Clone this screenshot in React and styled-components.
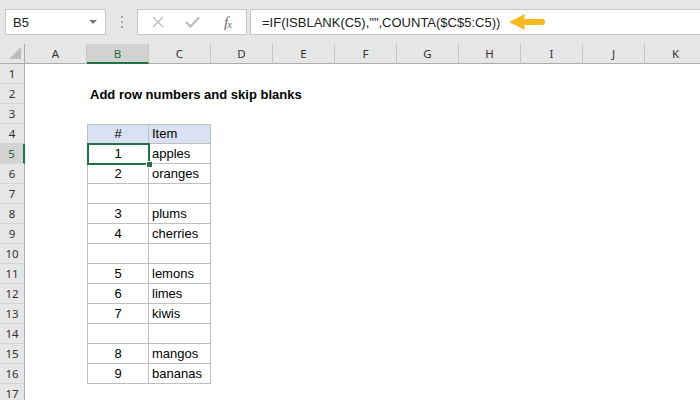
import React from "react";
import styled, { createGlobalStyle } from "styled-components";

const GlobalStyle = createGlobalStyle`
  html, body {
    margin: 0;
    padding: 0;
    background: #ffffff;
  }
  body {
    width: 700px;
    height: 400px;
    overflow: hidden;
    font-family: "Liberation Sans", Arial, sans-serif;
  }
`;

const COLS = ["A", "B", "C", "D", "E", "F", "G", "H", "I", "J", "K"];

// rows 5..16, null = blank row
const ITEMS = [
  [1, "apples"],
  [2, "oranges"],
  null,
  [3, "plums"],
  [4, "cherries"],
  null,
  [5, "lemons"],
  [6, "limes"],
  [7, "kiwis"],
  null,
  [8, "mangos"],
  [9, "bananas"],
];

const Sheet = styled.div`
  width: 700px;
  height: 400px;
  overflow: hidden;
  display: flex;
  flex-direction: column;
  background: #ffffff;
`;

const FormulaBar = styled.div`
  flex: none;
  height: 44px;
  box-sizing: border-box;
  padding: 9px 0 0 5px;
  background: #e6e6e6;
  display: flex;
  align-items: flex-start;
`;

const NameBox = styled.div`
  width: 101px;
  height: 26px;
  box-sizing: border-box;
  background: #ffffff;
  border: 1px solid #c6c6c6;
  display: flex;
  align-items: center;
  justify-content: space-between;
  padding: 0 8px 0 7px;
  font-size: 13px;
  color: #222;
`;

const Caret = styled.span`
  width: 0;
  height: 0;
  border-left: 4px solid transparent;
  border-right: 4px solid transparent;
  border-top: 4px solid #7a7a7a;
`;

const Grip = styled.div`
  width: 31px;
  height: 26px;
  display: flex;
  flex-direction: column;
  align-items: center;
  justify-content: center;
  gap: 3px;

  span {
    width: 2px;
    height: 2px;
    background: #a8a8a8;
  }
`;

const ButtonBox = styled.div`
  width: 110px;
  height: 26px;
  box-sizing: border-box;
  background: #ffffff;
  border: 1px solid #c6c6c6;
  display: flex;
  align-items: center;
  padding-left: 2px;
`;

const BarButton = styled.div`
  width: 35px;
  height: 24px;
  display: flex;
  align-items: center;
  justify-content: center;
  color: ${(p) => (p.$active ? "#666666" : "#bdbdbd")};
`;

const Fx = styled.span`
  font-family: "Liberation Serif", "Times New Roman", serif;
  font-style: italic;
  font-size: 15px;
  color: #6a6a6a;
  letter-spacing: -1px;

  sub {
    font-size: 11px;
    vertical-align: -1px;
  }
`;

const FormulaInput = styled.div`
  flex: 1;
  margin-left: 3px;
  margin-right: -2px;
  height: 26px;
  box-sizing: border-box;
  background: #ffffff;
  border: 1px solid #c6c6c6;
  display: flex;
  align-items: center;
  padding-left: 11px;
  gap: 9px;
  font-size: 13px;
  color: #222;
  white-space: nowrap;
`;

const Grid = styled.div`
  display: grid;
  grid-template-columns: 25px repeat(11, 62px);
  grid-auto-rows: 20px;
`;

const Corner = styled.div`
  box-sizing: border-box;
  background: #e6e6e6;
  border-right: 1px solid #ababab;
  border-bottom: 1px solid #ababab;
  display: flex;
  align-items: flex-end;
  justify-content: flex-end;
  padding: 0 3px 4px 0;

  &::after {
    content: "";
    width: 0;
    height: 0;
    border-left: 12px solid transparent;
    border-bottom: 12px solid #bcbcbc;
  }
`;

const ColHead = styled.div`
  box-sizing: border-box;
  background: ${(p) => (p.$selected ? "#d2d2d2" : "#e6e6e6")};
  border-right: 1px solid #c6c6c6;
  border-bottom: ${(p) => (p.$selected ? "2px solid #217346" : "1px solid #ababab")};
  color: ${(p) => (p.$selected ? "#1d6b40" : "#333")};
  font-family: "Noto Sans", "Open Sans", sans-serif;
  font-size: 11.5px;
  display: flex;
  align-items: center;
  justify-content: center;
`;

const RowHead = styled.div`
  box-sizing: border-box;
  background: ${(p) => (p.$selected ? "#d2d2d2" : "#e6e6e6")};
  border-right: ${(p) => (p.$selected ? "2px solid #217346" : "1px solid #ababab")};
  border-bottom: 1px solid #d4d4d4;
  color: ${(p) => (p.$selected ? "#1d6b40" : "#333")};
  font-family: "Noto Sans", "Open Sans", sans-serif;
  font-size: 11.5px;
  display: flex;
  align-items: center;
  justify-content: center;
`;

const Cell = styled.div`
  position: relative;
  box-sizing: border-box;
  background: ${(p) => (p.$head ? "#d9e1f2" : "transparent")};
  border-right: ${(p) => (p.$table ? "1px solid #bfbfbf" : "none")};
  border-bottom: ${(p) => (p.$table ? "1px solid #bfbfbf" : "none")};
  border-left: ${(p) => (p.$first ? "1px solid #bfbfbf" : "none")};
  border-top: ${(p) => (p.$top ? "1px solid #bfbfbf" : "none")};
  display: flex;
  align-items: flex-end;
  justify-content: ${(p) => (p.$center ? "center" : "flex-start")};
  padding: 0 3px 2px 3px;
  font-size: 13px;
  font-weight: ${(p) => (p.$bold ? "bold" : "normal")};
  color: #000;
  white-space: nowrap;
  overflow: visible;
  z-index: ${(p) => (p.$bold ? 1 : "auto")};
`;

const Selection = styled.div`
  position: absolute;
  top: -1px;
  left: -1px;
  right: -2px;
  bottom: -2px;
  border: 2px solid #217346;
  z-index: 2;
  pointer-events: none;
`;

const Handle = styled.div`
  position: absolute;
  right: -5px;
  bottom: -5px;
  width: 5px;
  height: 5px;
  background: #217346;
  border: 1px solid #ffffff;
`;

const CrossIcon = () => (
  <svg width="12" height="12" viewBox="0 0 12 12">
    <path d="M1 1 L11 11 M11 1 L1 11" stroke="currentColor" strokeWidth="1.4" fill="none" />
  </svg>
);

const CheckIcon = () => (
  <svg width="15" height="12" viewBox="0 0 15 12">
    <path d="M1 6 L5.5 10.5 L14 1.5" stroke="currentColor" strokeWidth="2.2" fill="none" />
  </svg>
);

const Arrow = () => (
  <svg width="37" height="16" viewBox="0 0 37 16">
    <path d="M0 8 L16 0 Q14 8 16 16 Z" fill="#f5b921" />
    <line x1="13" y1="8" x2="33" y2="8" stroke="#f5b921" strokeWidth="6" strokeLinecap="round" />
  </svg>
);

function cellsFor(row) {
  // returns content for columns A..K in a given row
  const cells = COLS.map(() => null);
  if (row === 2) {
    cells[1] = { text: "Add row numbers and skip blanks", bold: true };
  }
  if (row === 4) {
    cells[1] = { text: "#", center: true, table: true, head: true, top: true, first: true };
    cells[2] = { text: "Item", table: true, head: true, top: true };
  }
  if (row >= 5 && row <= 16) {
    const item = ITEMS[row - 5];
    cells[1] = { text: item ? item[0] : "", center: true, table: true, first: true, selected: row === 5 };
    cells[2] = { text: item ? item[1] : "", table: true };
  }
  return cells;
}

export default function App() {
  const rows = Array.from({ length: 17 }, (_, i) => i + 1);

  return (
    <>
      <GlobalStyle />
      <Sheet>
        <FormulaBar>
          <NameBox>
            B5
            <Caret />
          </NameBox>
          <Grip>
            <span />
            <span />
            <span />
          </Grip>
          <ButtonBox>
            <BarButton>
              <CrossIcon />
            </BarButton>
            <BarButton>
              <CheckIcon />
            </BarButton>
            <BarButton $active>
              <Fx>
                f<sub>x</sub>
              </Fx>
            </BarButton>
          </ButtonBox>
          <FormulaInput>
            {'=IF(ISBLANK(C5),"",COUNTA($C$5:C5))'}
            <Arrow />
          </FormulaInput>
        </FormulaBar>

        <Grid>
          <Corner />
          {COLS.map((c) => (
            <ColHead key={c} $selected={c === "B"}>
              {c}
            </ColHead>
          ))}

          {rows.map((r) => (
            <React.Fragment key={r}>
              <RowHead $selected={r === 5}>{r}</RowHead>
              {cellsFor(r).map((cell, i) =>
                cell ? (
                  <Cell
                    key={i}
                    $bold={cell.bold}
                    $center={cell.center}
                    $table={cell.table}
                    $head={cell.head}
                    $top={cell.top}
                    $first={cell.first}
                  >
                    {cell.text}
                    {cell.selected && (
                      <Selection>
                        <Handle />
                      </Selection>
                    )}
                  </Cell>
                ) : (
                  <Cell key={i} />
                )
              )}
            </React.Fragment>
          ))}
        </Grid>
      </Sheet>
    </>
  );
}
